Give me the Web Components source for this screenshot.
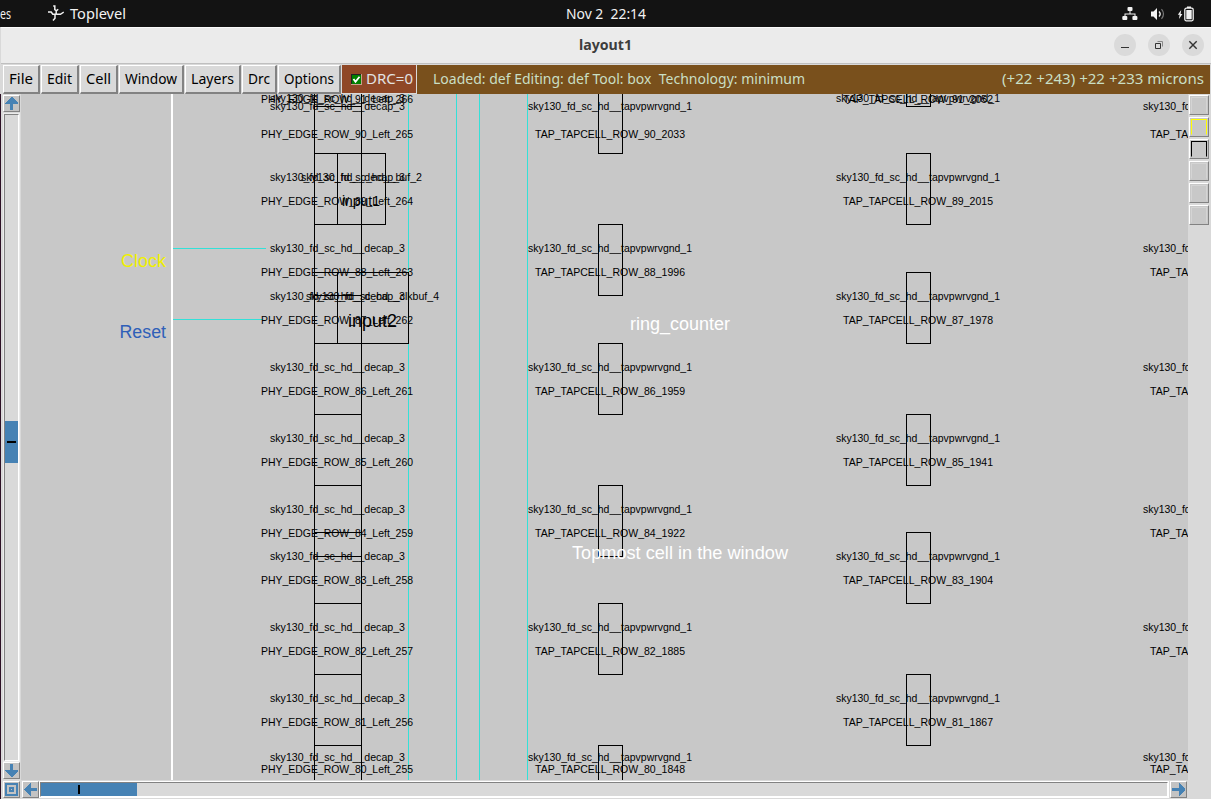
<!DOCTYPE html>
<html lang="en">
<head>
<meta charset="utf-8">
<title>layout1</title>
<style>
html,body{margin:0;height:100%;overflow:hidden;background:#d9d9d9}
</style>
</head>
<body>
<magic-desktop></magic-desktop>
<script>
const define = (name, css, html, setup) => customElements.define(name, class extends HTMLElement {
  connectedCallback() {
    if (this.shadowRoot) return;
    const t = document.createElement('template');
    t.innerHTML = `<style>*{box-sizing:border-box}:host{box-sizing:border-box}${css}</style>${html}`;
    const root = this.attachShadow({ mode: 'open' });
    root.appendChild(t.content.cloneNode(true));
    if (setup) setup(this, root);
  }
});

/* Text run fitted to a fixed advance width */
define('fit-text', `:host{display:block;flex:none;height:20px}svg{display:block;overflow:visible}`,
  `<svg height="20"><text x="0" y="15" xml:space="preserve" lengthAdjust="spacingAndGlyphs"></text></svg>`,
  (host, root) => {
    const w = host.getAttribute('w'), t = root.querySelector('text');
    root.querySelector('svg').setAttribute('width', w);
    host.style.width = w + 'px';
    t.setAttribute('textLength', w);
    t.setAttribute('fill', 'currentColor');
    t.textContent = host.getAttribute('label');
  });

define('top-bar', `
:host{display:grid;grid-template-columns:1fr 80px 1fr;align-items:center;height:27px;background:#131313;color:#f2f2f2;font:14px "Noto Sans",sans-serif}
.l{display:flex;align-items:center}
.l svg{margin:0 6px 0 37px}
.r{display:flex;justify-content:flex-end;align-items:center;gap:12px;padding-right:16px}
svg{display:block}`,
`<div class="l"><fit-text w="11" label="es"></fit-text>
<svg width="16" height="17" viewBox="0 0 16 17" fill="none" stroke="#f2f2f2" stroke-width="1.5"><path d="M5.2 1h1.6v3.6l1.4 1.2v2.6L7 10v3.2L5 15.5M0 7h3.2l1.6 2.2h3M8.4 9.3h4l3.4-2.2M8.6 5.6l1.6-1.4"/></svg>
<fit-text w="56" label="Toplevel"></fit-text></div>
<fit-text w="80" label="Nov 2  22:14"></fit-text>
<div class="r">
<svg width="16" height="14" viewBox="0 0 16 14" fill="#f2f2f2"><rect x="5.5" y="0" width="5" height="4" rx="1"/><rect x="0.3" y="9" width="5" height="4" rx="1"/><rect x="10.4" y="9" width="5" height="4" rx="1"/><path d="M7.5 4h1v2.5h5v3h-1v-2h-9v2h-1v-3h5z"/></svg>
<svg width="15" height="14" viewBox="0 0 15 14"><path d="M1 4.5h2.5L7 1v12L3.5 9.5H1z" fill="#f2f2f2"/><path d="M9 4.5q2.4 2.5 0 5" fill="none" stroke="#f2f2f2" stroke-width="1.3"/><path d="M11.5 2.2q4 4.8 0 9.6" fill="none" stroke="#777" stroke-width="1.2"/></svg>
<svg width="18" height="16" viewBox="0 0 18 16"><path d="M4.2 4L.8 8.8h1.8L2 13l3.4-5H3.6z" fill="#f2f2f2"/><rect x="7.8" y="2.2" width="8.4" height="12.6" rx="1.5" fill="none" stroke="#f2f2f2" stroke-width="1.3"/><path d="M10 .4h4v1.5h-4zM9.3 4h5.4v9.2H9.3z" fill="#f2f2f2"/></svg>
</div>`);

define('title-bar', `
:host{display:grid;grid-template-columns:1fr 54px 1fr;align-items:center;height:37px;padding-bottom:1px;background:#ebebeb;border-top:1px solid #fbfbfb;border-bottom:1px solid #bfbfbf;margin-left:1px;color:#3d3d3d;font:bold 14px "Noto Sans",sans-serif}
fit-text{grid-column:2}
div{display:flex;justify-content:flex-end;gap:12px;padding-right:7px}
svg{display:block}`,
`<fit-text w="53" label="layout1"></fit-text>
<div>
<svg width="22" height="22"><circle cx="11" cy="11" r="11" fill="#dadada"/><path d="M7 13.5h8" stroke="#333"/></svg>
<svg width="22" height="22"><circle cx="11" cy="11" r="11" fill="#dadada"/><path d="M7.5 9.5h5v5h-5z" fill="none" stroke="#333"/><path d="M9.5 7.5h5v5" fill="none" stroke="#888"/></svg>
<svg width="22" height="22"><circle cx="11" cy="11" r="11" fill="#dadada"/><path d="M7.3 7.3l7.4 7.4M14.7 7.3l-7.4 7.4" stroke="#333" stroke-width="1.4"/></svg>
</div>`);

define('menu-button', `
:host{display:flex;align-items:center;justify-content:center;height:29px;flex:none;background:#d9d9d9;border-style:solid;border-width:1px 2px 2px 1px;border-color:#fff #828282 #828282 #fff;color:#000}`,
`<slot></slot>`, host => {
  host.style.width = host.getAttribute('box') + 'px';
});

define('menu-bar', `
:host{display:flex;height:30px;padding:1px 1px 0 3px;gap:1px;background:#d9d9d9;font:14.5px "Noto Sans",sans-serif}
.drc{display:flex;align-items:center;gap:5px;width:74px;height:28px;background:#8f4726;color:#e2e2e2;padding-left:9px;flex:none}
.drc fit-text{margin-left:-1px}
.msg{display:flex;align-items:center;justify-content:space-between;flex:1;height:29px;background:#79501c;color:#c9dfc4;padding:0 6px 1px 16px}
svg{display:block}`,
`<menu-button box="37"><fit-text w="24" label="File"></fit-text></menu-button>
<menu-button box="38"><fit-text w="25" label="Edit"></fit-text></menu-button>
<menu-button box="38"><fit-text w="25" label="Cell"></fit-text></menu-button>
<menu-button box="65"><fit-text w="52" label="Window"></fit-text></menu-button>
<menu-button box="56"><fit-text w="43" label="Layers"></fit-text></menu-button>
<menu-button box="35"><fit-text w="22" label="Drc"></fit-text></menu-button>
<menu-button box="63"><fit-text w="50" label="Options"></fit-text></menu-button>
<div class="drc"><svg width="11" height="11"><path d="M0 0h11v11H0z" fill="#c8a08c"/><path d="M0 0h10v10H0z" fill="#222"/><path d="M1 1h9v9H1z" fill="#008000"/><path d="M2.5 5l2 2.8L8.5 2.8" fill="none" stroke="#fff" stroke-width="1.8"/></svg><fit-text w="47" label="DRC=0"></fit-text></div>
<div class="msg"><fit-text w="372" label="Loaded: def Editing: def Tool: box  Technology: minimum"></fit-text><fit-text w="202" label="(+22 +243) +22 +233 microns"></fit-text></div>`);

const shapes = {
  up: '<path d="M6 0h1l6 6v1H8v6H5V7H0V6z"/>',
  down: '<path d="M5 0h3v6h5v1L7 13H6L0 7V6h5z"/>',
  left: '<path d="M0 6l6-6h1v5h6v3H7v5H6L0 7z"/>',
  right: '<path d="M0 5h7V0h1l5 6v1l-5 6H7V8H0z"/>',
  box: '<path fill-rule="evenodd" d="M0 0h13v13H0zM2 2v9h9V2zM4 4h5v5H4zM6 6v1h1V6z"/>'
};
define('arrow-button', `
:host{display:flex;align-items:center;justify-content:center;flex:none;width:17px;height:17px;background:#c3c3c3;border:1px solid;border-color:#fff #828282 #828282 #fff}
svg{display:block}`, `<svg width="13" height="13" viewBox="0 0 13 13" fill="#4682b4" shape-rendering="crispEdges"></svg>`,
  (host, root) => root.querySelector('svg').innerHTML = shapes[host.getAttribute('kind')]);

define('v-scroll', `
:host{display:flex;flex-direction:column;align-items:center;width:20px;padding:1px 1px 1px 2px}
.track{width:15px;flex:1;margin:2px 0 1px;background:#d9d9d9;border:1px solid #828282;border-right-color:#fff;border-bottom-color:#fff;box-shadow:0 0 0 1px #ececec;display:flex;flex-direction:column}
.thumb{margin-top:306px;height:42px;background:#4682b4;display:grid;place-items:center}
i{display:block;width:9px;height:2px;background:#000}`,
`<arrow-button kind="up"></arrow-button><div class="track"><div class="thumb"><i></i></div></div><arrow-button kind="down"></arrow-button>`);

define('h-scroll', `
:host{display:flex;align-items:center;gap:2px;height:19px;padding:1px 1px 1px 2px}
.track{height:15px;flex:1;margin-left:-1px;background:#d9d9d9;border:1px solid #828282;border-right-color:#fff;border-bottom-color:#fff;box-shadow:0 0 0 1px #fff;display:flex}
.thumb{width:96px;background:#4682b4;display:grid;place-items:center}
i{display:block;width:2px;height:9px;background:#000;margin-right:20px}`,
`<arrow-button kind="box"></arrow-button><arrow-button kind="left"></arrow-button><div class="track"><div class="thumb"><i></i></div></div><arrow-button kind="right"></arrow-button>`);

define('layer-palette', `
:host{display:flex;flex-direction:column;gap:2px;width:22px;padding-top:1px;padding-left:1px}
div{width:20px;height:20px;background:#c8c8c8;border:1px solid;border-color:#fff #828282 #828282 #fff;padding:1px}
i{display:block;width:16px;height:16px;border:1px solid #d4d4d4;border-bottom-color:#c8c8c8}
.y{border-color:#ff0 #ff0 #c8c8c8 #ff0}.k{border-color:#000 #000 #c8c8c8 #000}`,
`<div><i></i></div><div><i class="y"></i></div><div><i class="k"></i></div><div><i></i></div><div><i></i></div><div><i></i></div>`);

/* Cell plot: coordinates share the window's pixel grid, shifted by the viewBox */
define('layout-plot', `:host{display:block;flex:1;height:686px;overflow:hidden;background:#c8c8c8}
svg{display:block}text{font-family:"Liberation Sans",Arial,sans-serif}`,
`<svg width="1167" height="686" viewBox="21 94 1167 686"></svg>`, (host, root) => {
  let lines = '', texts = '';
  const path = (d, c = '#000', w = 1) => lines += `<path d="${d}" fill="none" stroke="${c}" stroke-width="${w}" shape-rendering="crispEdges"/>`;
  const text = (s, x, y, w, size = 10.5, c = '#000') => texts += `<text x="${x}" y="${y}" textLength="${w}" lengthAdjust="spacingAndGlyphs" font-size="${size}" fill="${c}">${s}</text>`;
  const rect = (x, y, x2, y2) => path(`M${x + .5} ${y + .5}H${x2 + .5}V${y2 + .5}H${x + .5}z`);
  const cyan = '#33e0d8';
  [408, 456, 479, 527].forEach(x => path(`M${x + .5} 94V780`, cyan));
  path('M173 248.5H266', cyan);
  path('M173 319.5H263', cyan);
  path('M172 94V780', '#fff', 2);
  path('M314.5 94V780M361.5 94V780');
  [106, 153, 224, 272, 295, 343, 414, 485, 532, 556, 603, 674, 745].forEach(y => path(`M314 ${y + .5}H362`));
  rect(337, 153, 385, 224);
  rect(337, 272, 408, 343);
  [[80, 153], [224, 295], [343, 414], [485, 556], [603, 674], [745, 816]].forEach(([a, b]) => rect(598, a, 622, b));
  [[80, 106], [153, 224], [272, 343], [414, 485], [532, 603], [674, 745]].forEach(([a, b]) => rect(906, a, 930, b));
  const sky = [102, 110, 181, 252, 300, 371, 442, 513, 560, 631, 702, 761];
  const name = [103, 138, 205, 276, 324, 395, 466, 537, 584, 655, 726, 773];
  const serial = [2052, 2033, 2015, 1996, 1978, 1959, 1941, 1922, 1904, 1885, 1867, 1848];
  sky.forEach((y, i) => {
    const row = 91 - i;
    text('sky130_fd_sc_hd__decap_3', 270, y, 135);
    text(`PHY_EDGE_ROW_${row}_Left_${266 - i}`, 261, name[i], 152);
    const xs = i % 2 ? [528, 1143] : [836];
    xs.forEach(x => {
      text('sky130_fd_sc_hd__tapvpwrvgnd_1', x, y, 164);
      text(`TAP_TAPCELL_ROW_${row}_${serial[i]}`, x + 7, name[i], 150);
    });
  });
  text('sky130_fd_sc_hd__buf_2', 301, 181, 121);
  text('sky130_fd_sc_hd__clkbuf_4', 306, 300, 133);
  text('input1', 342, 206, 38, 14.5);
  text('input2', 348, 327, 49, 18.5);
  text('Clock', 121, 267, 45, 18, '#f0f000');
  text('Reset', 119.5, 338, 46.5, 18, '#2f5fb8');
  text('ring_counter', 630, 330, 100, 18, '#fff');
  text('Topmost cell in the window', 572, 559, 216, 18, '#fff');
  root.querySelector('svg').innerHTML = lines + texts;
});

define('magic-desktop', `
:host{display:flex;flex-direction:column;width:1211px;height:799px;background:#d9d9d9}
.win{border-left:1px solid #2c0f24;flex:1;display:grid;grid-template-columns:20px 1167px 1fr;grid-template-rows:30px 686px 19px}
menu-bar{grid-column:1/4;margin-left:-1px}
h-scroll{grid-column:1/3}`,
`<top-bar></top-bar><title-bar></title-bar>
<div class="win"><menu-bar></menu-bar><v-scroll></v-scroll><layout-plot></layout-plot><layer-palette></layer-palette><h-scroll></h-scroll></div>`);
</script>
</body>
</html>
